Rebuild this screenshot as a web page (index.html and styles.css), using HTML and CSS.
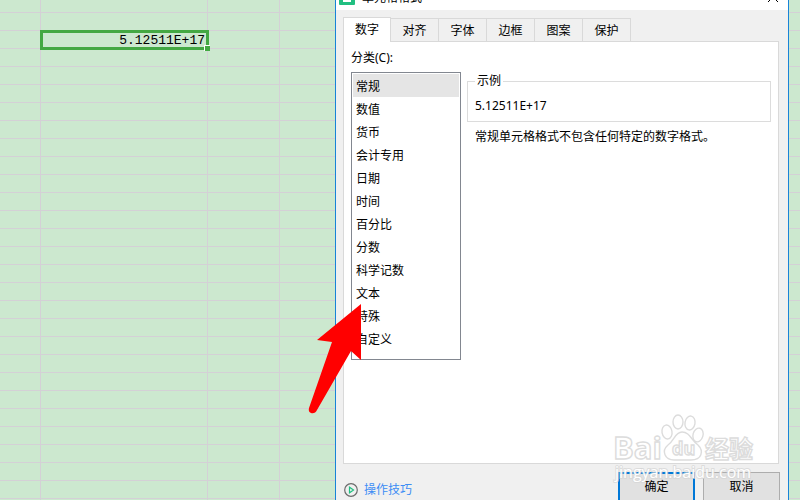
FILE: index.html
```html
<!DOCTYPE html>
<html lang="zh-CN">
<head>
    <meta charset="UTF-8">
    <meta name="viewport" content="width=device-width, initial-scale=1.0">
    <title>单元格格式</title>
    <link rel="stylesheet" href="styles.css">
</head>
<body>
    <table class="sheet">
        <colgroup>
            <col class="col-a">
            <col class="col-b">
            <col class="col-c">
            <col>
        </colgroup>
        <tbody id="sheet-rows">
            <tr class="row-cut"><td></td><td></td><td></td><td></td></tr>
            <tr><td></td><td></td><td></td><td></td></tr>
            <tr><td></td><td class="selected">5.12511E+17<span class="fill-handle"></span></td><td></td><td></td></tr>
        </tbody>
    </table>

    <div class="dialog" role="dialog" aria-labelledby="dialog-title">
        <div class="title-bar">
            <svg class="app-icon" viewBox="0 0 16 16">
                <rect width="16" height="16" rx="1" fill="#21bf81"/>
                <path d="M4 4h8v9H4z" fill="#fff"/>
                <path d="M6 8h4" stroke="#21bf81"/>
            </svg>
            <span class="title" id="dialog-title">单元格格式</span>
            <button class="close" type="button" aria-label="关闭">
                <svg viewBox="0 0 12 12"><path d="M1 1l10 10M11 1L1 11" stroke="#000"/></svg>
            </button>
        </div>

        <div class="dialog-body">
            <div class="tabs" role="tablist">
                <button class="tab active" type="button" role="tab" aria-selected="true">数字</button>
                <button class="tab" type="button" role="tab">对齐</button>
                <button class="tab" type="button" role="tab">字体</button>
                <button class="tab" type="button" role="tab">边框</button>
                <button class="tab" type="button" role="tab">图案</button>
                <button class="tab" type="button" role="tab">保护</button>
            </div>

            <div class="panel" role="tabpanel">
                <label class="category-label" for="category">分类(C):</label>
                <div class="panel-row">
                    <select class="category" id="category" size="12">
                        <option selected>常规</option>
                        <option>数值</option>
                        <option>货币</option>
                        <option>会计专用</option>
                        <option>日期</option>
                        <option>时间</option>
                        <option>百分比</option>
                        <option>分数</option>
                        <option>科学记数</option>
                        <option>文本</option>
                        <option>特殊</option>
                        <option>自定义</option>
                    </select>
                    <div class="details">
                        <fieldset class="sample">
                            <legend>示例</legend>
                            5.12511E+17
                        </fieldset>
                        <p class="description">常规单元格格式不包含任何特定的数字格式。</p>
                    </div>
                </div>
            </div>

            <div class="footer">
                <a class="tips" href="#">
                    <svg class="tips-icon" viewBox="0 0 14 14">
                        <circle cx="7" cy="7" r="6.3" fill="none" stroke="#6b6b6b" stroke-width="1.2"/>
                        <path d="M5.5 4.2v5.6l4-2.8z" fill="none" stroke="#21bf81" stroke-width="1.2"/>
                    </svg>
                    操作技巧
                </a>
                <button class="btn primary" type="button">确定</button>
                <button class="btn" type="button">取消</button>
            </div>
        </div>
    </div>

    <svg class="arrow" viewBox="0 0 56 112">
        <path d="M54 2L10 38L25 40L2 106Q1 110 4 111Q8 112 10 108L44 49L54 58z" fill="#f00"/>
    </svg>

    <svg class="watermark" viewBox="0 0 150 76">
        <g class="wm-shape">
            <text class="wm-logo" x="3" y="49">Bai</text>
            <ellipse cx="57" cy="22" rx="5" ry="7" transform="rotate(-10 57 22)"/>
            <ellipse cx="68" cy="12" rx="5" ry="7"/>
            <ellipse cx="80" cy="13" rx="5" ry="7" transform="rotate(10 80 13)"/>
            <ellipse cx="88" cy="25" rx="5" ry="7" transform="rotate(16 88 25)"/>
            <path d="M72 22C65 22 64 31 58 35C51 41 55 50 64 50H81C92 50 94 41 88 35C81 30 80 22 72 22z"/>
            <text class="wm-du" x="62" y="45">du</text>
            <text class="wm-cjk" x="95" y="48">经验</text>
        </g>
        <text class="wm-url" x="5" y="68">jingyan.baidu.com</text>
    </svg>

    <script>
        // fill the rest of the sheet with empty rows
        const rows = document.getElementById('sheet-rows');
        const count = Math.ceil(window.innerHeight / 18);

        for (let i = rows.rows.length; i <= count; i++) {
            const row = rows.insertRow();
            for (let c = 0; c < 4; c++) {
                row.insertCell();
            }
        }
    </script>
</body>
</html>
```
FILE: styles.css
```css
* {
    box-sizing: border-box;
}

body {
    margin: 0;
    position: relative;
    height: 100vh;
    overflow: hidden;
    background: #cce8cf;
    font-family: "Noto Sans", "Noto Sans CJK SC", sans-serif;
    font-size: 12px;
    line-height: 18px;
    color: #000;
}

button,
select {
    font: inherit;
    color: inherit;
}

/* sheet */
.sheet {
    width: 100%;
    table-layout: fixed;
    border-spacing: 0;
}

.col-a {
    width: 41px;
}

.col-b {
    width: 167px;
}

.col-c {
    width: 72px;
}

.sheet td {
    height: 18px;
    padding: 0;
    border-right: 1px solid #d4d0d6;
    border-bottom: 1px solid #d4d0d6;
}

.sheet td:last-child {
    border-right: 0;
}

.sheet .row-cut td {
    height: 13px;
}

.sheet .selected {
    position: relative;
    padding: 3px 2px 0 0;
    outline: 3px solid #43a843;
    outline-offset: -2px;
    font-family: "Liberation Mono", "Noto Sans CJK SC", monospace;
    font-size: 13px;
    line-height: 14px;
    text-align: right;
}

.fill-handle {
    position: absolute;
    right: -3px;
    bottom: -3px;
    width: 6px;
    height: 6px;
    background: #43a843;
    border-top: 1px solid #fff;
    border-left: 1px solid #fff;
}

/* dialog window */
.dialog {
    position: absolute;
    top: -22px;
    right: 11px;
    bottom: -12px;
    left: 335px;
    display: flex;
    flex-direction: column;
    background: #f0f0f0;
    border: 1px solid #1883d7;
}

.title-bar {
    display: flex;
    align-items: flex-end;
    gap: 7px;
    height: 31px;
    padding: 0 9px 3px 3px;
    background: #fff;
}

.app-icon {
    width: 16px;
    height: 16px;
    margin-bottom: 2px;
}

.title {
    flex: 1;
}

.close {
    display: flex;
    margin-bottom: 4px;
    padding: 0;
    border: 0;
    background: none;
}

.close svg {
    width: 12px;
    height: 12px;
}

.dialog-body {
    flex: 1;
    display: flex;
    flex-direction: column;
    padding: 7px 8px 9px 7px;
}

/* tabs */
.tabs {
    display: flex;
    align-items: flex-end;
}

.tab {
    width: 48px;
    height: 23px;
    padding: 1px 0 0;
    border: 1px solid #d9d9d9;
    border-left: 0;
    border-bottom: 0;
    background: #f0f0f0;
}

.tab.active {
    position: relative;
    height: 25px;
    margin-bottom: -1px;
    padding: 0;
    border-left: 1px solid #d9d9d9;
    background: #fff;
}

.panel {
    flex: 1;
    margin-right: 1px;
    padding: 7px;
    background: #fff;
    border: 1px solid #d9d9d9;
}

.category-label {
    display: block;
    margin-bottom: 5px;
}

.panel-row {
    display: flex;
    align-items: flex-start;
    gap: 6px;
}

.category {
    width: 110px;
    height: 288px;
    padding: 1px;
    border: 1px solid #828790;
    border-radius: 0;
    background: #fff;
    outline: 0;
    overflow: hidden;
}

.category option {
    height: 23px;
    min-height: 23px;
    padding: 3px 3px 0;
    line-height: 20px;
    color: #000;
}

.category option:checked {
    background: #e5e5e5 linear-gradient(#e5e5e5, #e5e5e5);
}

.details {
    flex: 1;
}

.sample {
    margin: 0;
    padding: 7px 7px 6px;
    border: 1px solid #dcdcdc;
}

.sample legend {
    padding: 0 2px;
}

.description {
    margin: 6px 0 0 8px;
}

/* footer */
.footer {
    display: flex;
    align-items: center;
    gap: 8px;
    padding-top: 8px;
}

.tips {
    display: flex;
    align-items: center;
    gap: 6px;
    margin-right: auto;
    padding: 5px 0 0 1px;
    color: #3c8df5;
    text-decoration: none;
}

.tips-icon {
    width: 14px;
    height: 14px;
}

.btn {
    width: 77px;
    height: 30px;
    padding: 0;
    border: 1px solid #adadad;
    background: #e1e1e1;
}

.btn.primary {
    border: 2px solid #0078d7;
}

/* pointer and watermark lie over the windows */
.arrow {
    position: absolute;
    top: 302px;
    left: 307px;
    width: 56px;
    height: 112px;
}

.watermark {
    position: absolute;
    right: 40px;
    bottom: 14px;
    width: 150px;
    height: 76px;
    overflow: visible;
    pointer-events: none;
}

.wm-shape {
    fill: #fff;
    fill-opacity: 0.7;
    stroke: #dcdcdc;
    stroke-width: 1.4;
}

.wm-logo {
    font-family: "Open Sans", sans-serif;
    font-size: 31px;
    font-weight: bold;
}

.wm-du {
    font-family: "Open Sans", sans-serif;
    font-size: 18px;
    font-weight: bold;
}

.wm-cjk {
    font-family: "Noto Sans CJK SC", sans-serif;
    font-size: 24px;
    font-weight: bold;
}

.wm-url {
    font-family: "Open Sans", sans-serif;
    font-size: 16px;
    fill: #fff;
    stroke: #d4d4d4;
    stroke-width: 2;
    stroke-opacity: 0.7;
    paint-order: stroke;
}
```
